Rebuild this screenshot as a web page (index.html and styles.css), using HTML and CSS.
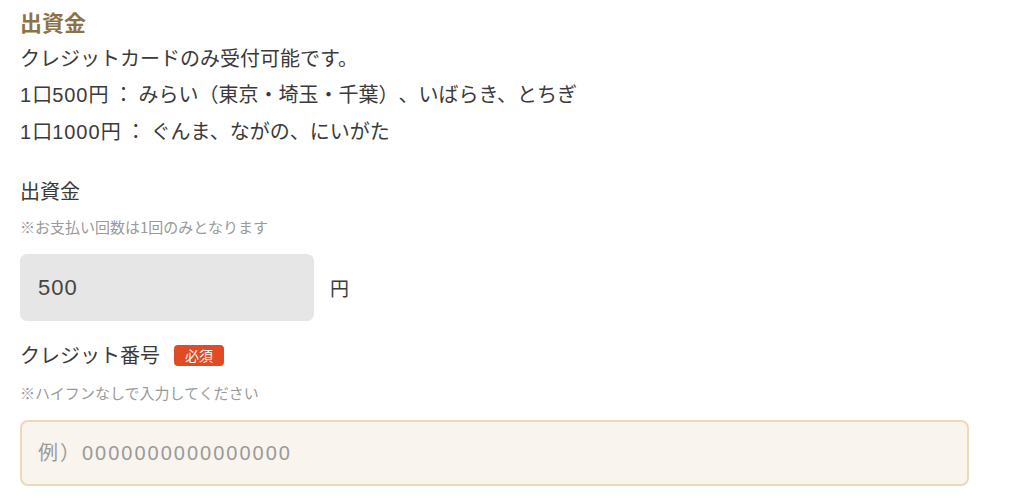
FILE: index.html
```html
<!DOCTYPE html>
<html lang="ja">
<head>
<meta charset="utf-8">
<link rel="stylesheet" href="styles.css">
</head>
<body>
<div class="page">
  <h2 class="title">出資金</h2>
  <div class="desc">
    <p>クレジットカードのみ受付可能です。</p>
    <p><span class="num">1</span>口<span class="num">500</span>円<span class="sep">：</span>みらい（東京・埼玉・千葉）、いばらき、とちぎ</p>
    <p><span class="num">1</span>口<span class="num">1000</span>円<span class="sep">：</span>ぐんま、ながの、にいがた</p>
  </div>
  <div class="field field-amount">
    <div class="label">出資金</div>
    <div class="note">※お支払い回数は1回のみとなります</div>
    <div class="amount-row">
      <div class="amount-box">500</div>
      <span class="unit">円</span>
    </div>
  </div>
  <div class="field field-card">
    <div class="label">クレジット番号<span class="badge">必須</span></div>
    <div class="note">※ハイフンなしで入力してください</div>
    <input class="card-input" type="text" placeholder="例）0000000000000000">
  </div>
</div>
</body>
</html>
```
FILE: styles.css
```css
* { box-sizing: border-box; }
html, body { margin: 0; padding: 0; background: #fff; }
body {
  font-family: "Noto Sans CJK JP", "Noto Sans", sans-serif;
  color: #333;
  text-spacing-trim: space-all;
}
.page { padding: 0 20px; width: 969px; }
.title {
  margin: 0;
  padding-top: 6px;
  font-size: 22px;
  line-height: 30px;
  font-weight: 700;
  color: #8d7248;
}
.desc { margin-top: 4px; }
.desc p {
  margin: 0;
  font-size: 20px;
  line-height: 36px;
  color: #3a3a3a;
}
.num {
  font-family: "Liberation Sans", sans-serif;
  font-size: 20px;
  letter-spacing: 1px;
}
.sep { margin: 0 5px 0 5px; }
.field-amount { margin-top: 28px; }
.label {
  display: flex;
  align-items: center;
  font-size: 20px;
  line-height: 26px;
  color: #3a3a3a;
}
.note {
  margin-top: 13px;
  font-size: 15px;
  line-height: 20px;
  color: #9a9a9a;
}
.amount-row {
  margin-top: 17px;
  display: flex;
  align-items: center;
}
.amount-box {
  width: 294px;
  height: 67px;
  background: #e6e6e6;
  border-radius: 7px;
  padding-left: 18px;
  display: flex;
  align-items: center;
  font-size: 22px;
  letter-spacing: 1px;
  color: #444;
  font-family: "Liberation Sans", "Noto Sans CJK JP", sans-serif;
}
.unit {
  margin-left: 16px;
  font-size: 19px;
  color: #3a3a3a;
}
.field-card { margin-top: 21px; }
.badge {
  display: inline-block;
  margin-left: 14px;
  width: 50px;
  height: 21px;
  line-height: 21px;
  text-align: center;
  background: #e04a24;
  color: #fff;
  font-size: 14px;
  border-radius: 4px;
}
.field-card .note { margin-top: 15px; }
.card-input {
  display: block;
  margin-top: 17px;
  width: 949px;
  height: 66px;
  background: #f9f4ee;
  border: 2px solid #ecd9b8;
  border-radius: 8px;
  padding: 0 16px;
  font-size: 20px;
  letter-spacing: 2px;
  color: #333;
  font-family: "Liberation Sans", "Noto Sans CJK JP", sans-serif;
  outline: none;
}
.card-input::placeholder { color: #9a9a9a; }
```
